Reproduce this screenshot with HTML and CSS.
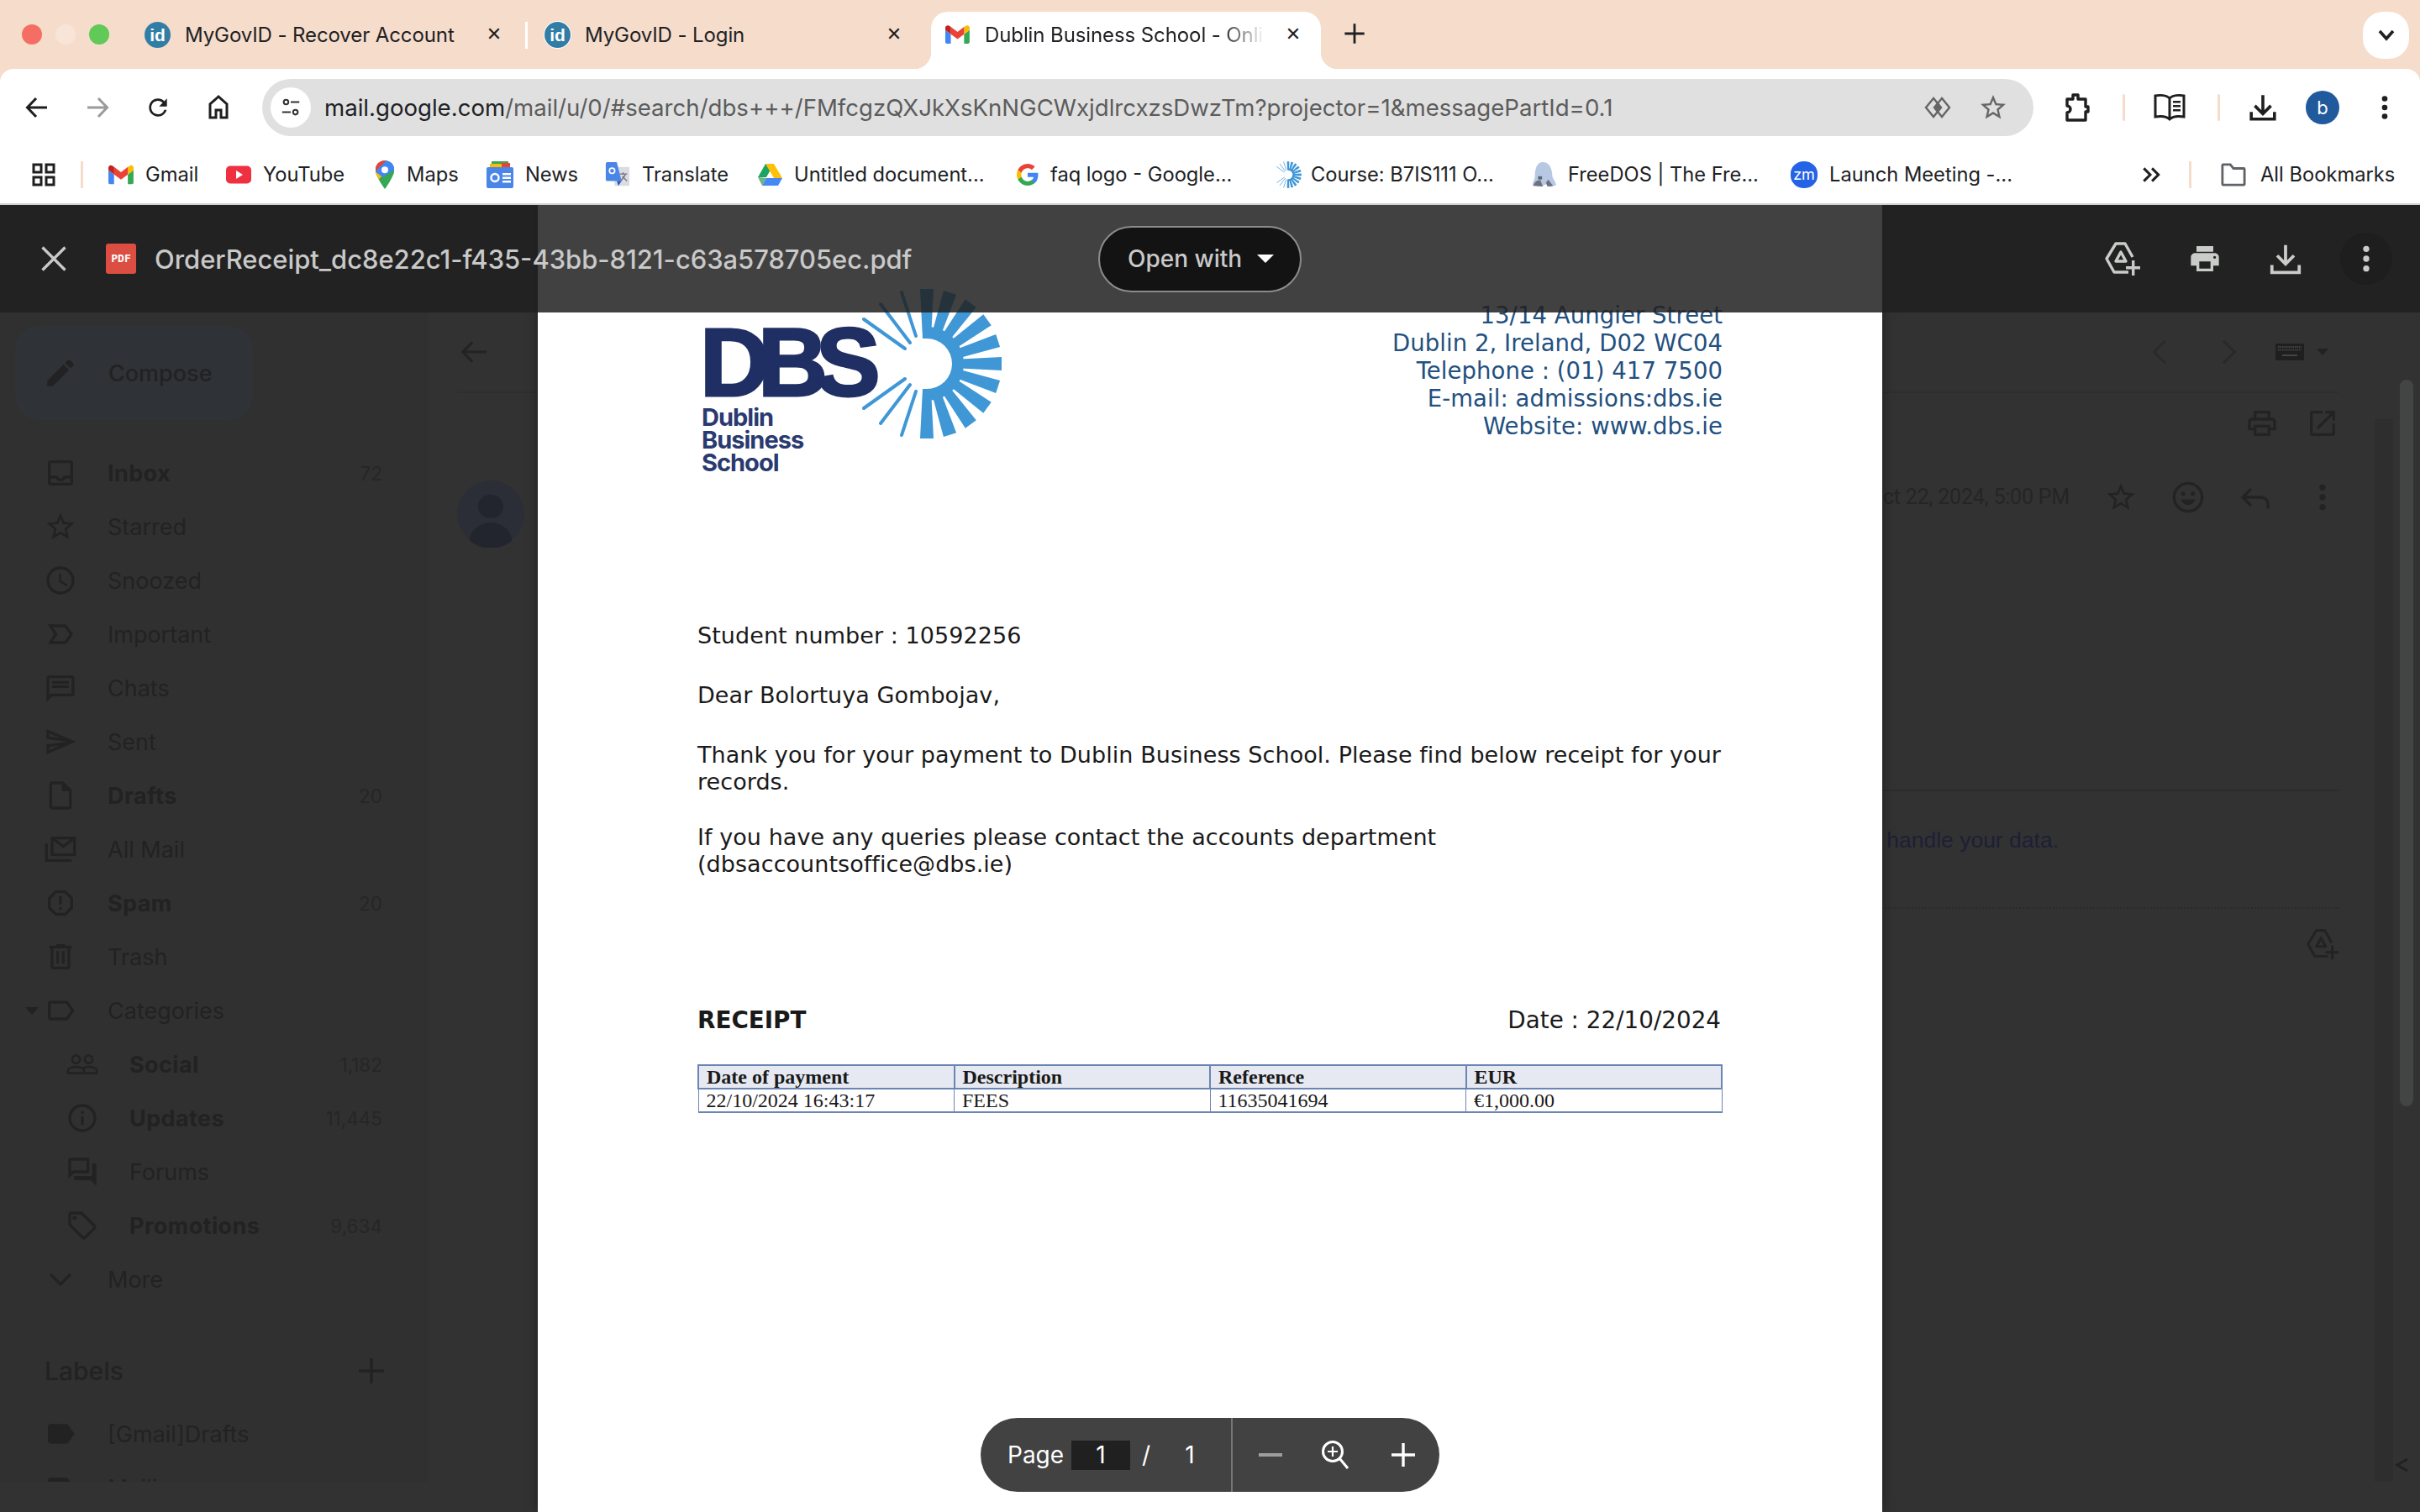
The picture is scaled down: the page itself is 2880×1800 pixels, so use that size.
FILE: index.html
```html
<!DOCTYPE html>
<html lang="en">
<head>
<meta charset="utf-8">
<title>Dublin Business School - Online</title>
<link rel="stylesheet" href="styles.css">
</head>
<body>
<svg class="defs" aria-hidden="true">
  <symbol id="i-gmail" viewBox="0 0 24 18">
    <path fill="#4285f4" d="M1.6 18h3.8V8.7L0 4.6v11.8C0 17.3.7 18 1.6 18z"/>
    <path fill="#34a853" d="M18.5 18h3.8c.9 0 1.6-.7 1.6-1.6V4.6l-5.4 4.1z"/>
    <path fill="#fbbc04" d="M18.5 1.6v7.1L24 4.6V2.4C24 .4 21.7-.7 20.1.5z"/>
    <path fill="#ea4335" d="M5.5 8.7V1.6L12 6.5l6.5-4.9v7.1L12 13.6z"/>
    <path fill="#c5221f" d="M0 2.4v2.2l5.5 4.1V1.6L3.9.5C2.3-.7 0 .4 0 2.4z"/>
  </symbol>
  <symbol id="i-sun" viewBox="0 0 180 180">
    <g fill="#3f97d6">
      <path d="M90 46a44 44 0 0 1 0 88z"/>
      <path d="M120 85l59-3v16l-59-3z" transform="rotate(-90 90 90)"/>
      <path d="M120 85l59-3v16l-59-3z" transform="rotate(-72 90 90)"/>
      <path d="M120 85l59-3v16l-59-3z" transform="rotate(-54 90 90)"/>
      <path d="M120 85l59-3v16l-59-3z" transform="rotate(-36 90 90)"/>
      <path d="M120 85l59-3v16l-59-3z" transform="rotate(-18 90 90)"/>
      <path d="M120 85l59-3v16l-59-3z"/>
      <path d="M120 85l59-3v16l-59-3z" transform="rotate(18 90 90)"/>
      <path d="M120 85l59-3v16l-59-3z" transform="rotate(36 90 90)"/>
      <path d="M120 85l59-3v16l-59-3z" transform="rotate(54 90 90)"/>
      <path d="M120 85l59-3v16l-59-3z" transform="rotate(72 90 90)"/>
      <path d="M120 85l59-3v16l-59-3z" transform="rotate(90 90 90)"/>
    </g>
    <circle cx="90" cy="90" r="30" fill="#fff"/>
    <g stroke="#3f97d6" stroke-width="4" stroke-linecap="round">
      <path d="M60 5l17 52M35 19l35 46M15 37l49 35M60 175l17-52M35 161l35-46M15 143l49-35"/>
    </g>
  </symbol>
  <symbol id="i-drive-add" viewBox="0 0 44 44">
    <g fill="none" stroke="currentColor" stroke-width="3.4" stroke-linejoin="round">
      <path d="M29 38H12L3 22 14 4h11l9 16"/>
      <path d="M20 14l6 11H14z"/>
    </g>
    <path fill="currentColor" d="M33 24h3.4v7H43v3.4h-6.6V42H33v-7.600h-7V31h7z"/>
  </symbol>
  <symbol id="i-print" viewBox="0 0 24 24"><path d="M19 8H5c-1.660 0-3 1.340-3 3v6h4v4h12v-4h4v-6c0-1.660-1.340-3-3-3zm-3 11H8v-5h8v5zm3-7c-.55 0-1-.45-1-1s.45-1 1-1 1 .45 1 1-.45 1-1 1zm-1-9H6v4h12V3z"/></symbol>
  <symbol id="i-print-o" viewBox="0 0 24 24"><path d="M19 8h-1V3H6v5H5c-1.660 0-3 1.340-3 3v6h4v4h12v-4h4v-6c0-1.660-1.340-3-3-3zM8 5h8v3H8V5zm8 12v2H8v-4h8v2zm2-2v-2H6v2H4v-4c0-.55.45-1 1-1h14c.55 0 1 .45 1 1v4h-2z"/></symbol>
  <symbol id="i-star" viewBox="0 0 24 24"><path d="M22 9.240l-7.190-.62L12 2 9.190 8.630 2 9.240l5.460 4.730L5.820 21 12 17.270 18.180 21l-1.630-7.030L22 9.240zM12 15.400l-3.760 2.270 1-4.280-3.320-2.880 4.380-.38L12 6.100l1.710 4.040 4.380.38-3.320 2.880 1 4.280L12 15.400z"/></symbol>
  <symbol id="i-dots" viewBox="0 0 24 24"><circle cx="12" cy="5" r="2.200"/><circle cx="12" cy="12" r="2.200"/><circle cx="12" cy="19" r="2.200"/></symbol>
  <symbol id="i-label" viewBox="0 0 24 24"><path d="M17.630 5.840C17.270 5.330 16.670 5 16 5L5 5.010C3.900 5.010 3 5.900 3 7v10c0 1.100.9 1.990 2 1.990L16 19c.67 0 1.270-.33 1.630-.84L22 12l-4.370-6.160zM16 17H5V7h11l3.550 5L16 17z"/></symbol>
  <symbol id="i-label-f" viewBox="0 0 24 24"><path d="M17.630 5.840C17.270 5.330 16.670 5 16 5L5 5.010C3.900 5.010 3 5.900 3 7v10c0 1.100.9 1.990 2 1.990L16 19c.67 0 1.270-.33 1.630-.84L22 12l-4.370-6.160z"/></symbol>
</svg>

<div class="browser">
  <div class="tabstrip">
    <div class="lights"><span class="light red"></span><span class="light idle"></span><span class="light green"></span></div>
    <div class="tab tab-one">
      <span class="fav-id">id</span>
      <span class="tab-title">MyGovID - Recover Account</span>
      <span class="tab-x">✕</span>
    </div>
    <span class="tab-sep"></span>
    <div class="tab tab-two">
      <span class="fav-id fav-square">id</span>
      <span class="tab-title">MyGovID - Login</span>
      <span class="tab-x">✕</span>
    </div>
    <div class="tab tab-active">
      <svg class="fav-gmail"><use href="#i-gmail"/></svg>
      <span class="tab-title tab-fade">Dublin Business School - Online</span>
      <span class="tab-x">✕</span>
    </div>
    <svg class="newtab" viewBox="0 0 24 24"><path d="M10.800 2h2.400v8.800H22v2.400h-8.800V22h-2.400v-8.800H2v-2.400h8.800z"/></svg>
    <div class="tab-menu"><svg viewBox="0 0 24 24"><path d="M4 7l8 9 8-9" fill="none" stroke="#202124" stroke-width="3.600"/></svg></div>
  </div>

  <div class="chrome">
    <div class="toolbar">
      <svg class="tb-icon" viewBox="0 0 32 32"><path d="M28 16H5M15 5 4.500 16 15 27" fill="none" stroke="#1f1f1f" stroke-width="3"/></svg>
      <svg class="tb-icon tb-disabled" viewBox="0 0 32 32"><path d="M4 16h23M17 5l10.500 11L17 27" fill="none" stroke="#9a9a9a" stroke-width="3"/></svg>
      <svg class="tb-icon" viewBox="0 0 24 24"><path fill="#1f1f1f" d="M17.650 6.350A7.958 7.958 0 0 0 12 4c-4.420 0-7.990 3.580-7.990 8s3.570 8 7.990 8c3.730 0 6.840-2.550 7.730-6h-2.080A5.990 5.990 0 0 1 12 18c-3.310 0-6-2.690-6-6s2.690-6 6-6c1.660 0 3.140.69 4.220 1.780L13 11h7V4l-2.350 2.350z"/></svg>
      <svg class="tb-icon" viewBox="0 0 32 32"><path d="M16 3 6 12v16h7v-9h6v9h7V12z" fill="none" stroke="#1f1f1f" stroke-width="3"/></svg>
      <div class="omnibox">
        <span class="site-chip"><svg viewBox="0 0 28 28"><g fill="none" stroke="#333" stroke-width="2.200"><circle cx="8" cy="7" r="3"/><path d="M14 7h11M3 20h11"/><circle cx="20" cy="20" r="3"/></g></svg></span>
        <span class="url"><b>mail.google.com</b>/mail/u/0/#search/dbs+++/FMfcgzQXJkXsKnNGCWxjdlrcxzsDwzTm?projector=1&amp;messagePartId=0.1</span>
        <svg class="omni-icon lens" viewBox="0 0 32 26"><g fill="none" stroke="#666" stroke-width="2.400"><path d="M11 2 2 13l9 11 9-11z"/><path d="M21 2 12 13l9 11 9-11z"/></g><path d="M16 7l5 6-5 6-5-6z" fill="#666"/></svg>
        <svg class="omni-icon star" viewBox="0 0 24 24" fill="#666"><use href="#i-star"/></svg>
      </div>
      <div class="tb-right">
        <svg class="ext" viewBox="0 0 32 36"><path d="M4 8h7V3h6v5h9v9h3v6h-3v10H4v-9a4 4 0 0 0 0-8z" fill="none" stroke="#1f1f1f" stroke-width="3.400" stroke-linejoin="round"/></svg>
        <span class="vsep"></span>
        <svg class="book" viewBox="0 0 40 34"><g fill="none" stroke="#1f1f1f" stroke-width="3"><path d="M20 6C16 2 8 2 3 3v25c6-1 13-1 17 3 4-4 11-4 17-3V3c-5-1-13-1-17 3zM20 6v25"/></g><path d="M24 9h9v2.500h-9zM24 14h9v2.500h-9zM24 19h9v2.500h-9z" fill="#1f1f1f"/></svg>
        <span class="vsep sep-two"></span>
        <svg class="dl" viewBox="0 0 32 32"><path d="M16 2v20M7 14l9 9 9-9M3 21v8h26v-8" fill="none" stroke="#1f1f1f" stroke-width="3.400"/></svg>
        <span class="avatar">b</span>
        <svg class="menu-dots" fill="#1f1f1f"><use href="#i-dots"/></svg>
      </div>
    </div>

    <div class="bookmarks">
      <svg class="apps" viewBox="0 0 28 28"><g fill="none" stroke="#1f1f1f" stroke-width="3"><rect x="2" y="2" width="9" height="9"/><rect x="17" y="2" width="9" height="9"/><rect x="2" y="17" width="9" height="9"/><rect x="17" y="17" width="9" height="9"/></g></svg>
      <span class="bm-sep"></span>
      <div class="bm-grid">
        <div class="bm"><svg class="bm-ic w-gm"><use href="#i-gmail"/></svg><span>Gmail</span></div>
        <div class="bm"><svg class="bm-ic" viewBox="0 0 30 30"><rect x="0" y="4.500" width="30" height="21" rx="5" fill="#ee3040"/><path d="M12 10l8 5-8 5z" fill="#fff"/></svg><span>YouTube</span></div>
        <div class="bm"><svg class="bm-ic w-maps" viewBox="0 0 24 36"><defs><clipPath id="pin"><path d="M12 0C5.400 0 0 5.400 0 12c0 8 12 24 12 24s12-16 12-24C24 5.400 18.600 0 12 0z"/></clipPath></defs><g clip-path="url(#pin)"><rect width="24" height="36" fill="#34a853"/><path d="M0 0h14L0 14z" fill="#ea4335"/><path d="M14 0h10v12L8 22 0 14z" fill="#4285f4"/><path d="M0 14l8 6-8 8z" fill="#fbbc04"/><path d="M24 12 8 22l4 14z" fill="#34a853"/></g><circle cx="12" cy="12" r="4.200" fill="#fff"/></svg><span>Maps</span></div>
        <div class="bm"><svg class="bm-ic w-news" viewBox="0 0 32 32"><path d="M6 0h20v8H6z" fill="#34a853"/><path d="M16 2h12v8H16z" fill="#ea4335"/><path d="M4 3h14v6H4z" fill="#fbbc04"/><rect y="7" width="32" height="25" rx="2" fill="#4a86e8"/><path d="M19 14h10v2.500H19zM19 18.500h10V21H19zM19 23h10v2.500H19z" fill="#fff"/><circle cx="10" cy="19.500" r="4.500" fill="none" stroke="#fff" stroke-width="2.400"/></svg><span>News</span></div>
        <div class="bm"><svg class="bm-ic" viewBox="0 0 30 32"><rect x="11" y="6" width="19" height="24" rx="1" fill="#dadce0"/><path d="M0 2a2 2 0 0 1 2-2h12l6 24H2a2 2 0 0 1-2-2z" fill="#4a86e8"/><path d="M14 24h6l-4 6z" fill="#2a56c6"/><circle cx="8" cy="11" r="3.400" fill="none" stroke="#fff" stroke-width="1.800"/><path d="M18 15h9M22 13v3M19 24l6-8M21 18l6 6" stroke="#6b7280" stroke-width="1.400" fill="none"/></svg><span>Translate</span></div>
        <div class="bm"><svg class="bm-ic" viewBox="0 0 30 28"><path d="M10 1h10l-9 16H1z" fill="#1ea362"/><path d="M10 1h10l10 17H20z" fill="#ffc107"/><path d="M6 27 11 18h19l-5 9z" fill="#4688f4"/><path d="M1 17l5 10 5-9z" fill="#188038" opacity=".6"/></svg><span>Untitled document...</span></div>
        <div class="bm"><svg class="bm-ic w-g" viewBox="0 0 24 24"><path fill="#4285F4" d="M23.500 12.300c0-.8-.1-1.600-.2-2.300H12v4.500h6.500c-.3 1.500-1.100 2.800-2.400 3.600v3h3.900c2.300-2.100 3.500-5.200 3.500-8.800z"/><path fill="#34A853" d="M12 24c3.200 0 6-1.100 8-2.900l-3.900-3c-1.100.7-2.500 1.200-4.100 1.200-3.100 0-5.800-2.100-6.700-5H1.300v3.100C3.300 21.300 7.300 24 12 24z"/><path fill="#FBBC05" d="M5.300 14.300c-.3-.7-.4-1.500-.4-2.300s.1-1.600.4-2.300V6.600h-4C.5 8.200 0 10 0 12s.5 3.800 1.300 5.400z"/><path fill="#EA4335" d="M12 4.800c1.800 0 3.300.6 4.600 1.800L20 3.100C18 1.200 15.200 0 12 0 7.300 0 3.300 2.700 1.300 6.600l4 3.100c.9-2.900 3.600-4.900 6.700-4.900z"/></svg><span>faq logo - Google...</span></div>
        <div class="bm"><svg class="bm-ic w-sun"><use href="#i-sun"/></svg><span>Course: B7IS111 O...</span></div>
        <div class="bm"><svg class="bm-ic" viewBox="0 0 32 32"><path d="M15 0c8 0 12 8 12 17 0 3 4 7 5 12-4 1-6 3-10 2l-3-3-5 3c-5 0-9-2-12-1 0-5 3-8 3-13C5 8 8 0 15 0z" fill="#b7c9e2"/><path d="M3 30c2-6 5-7 9-7l3 8zM19 26l3-4 6 8-7 1z" fill="#6b7280"/><path d="M9 18h5v4H9z" fill="#5a6472"/></svg><span>FreeDOS | The Fre...</span></div>
        <div class="bm"><span class="zm">zm</span><span>Launch Meeting -...</span></div>
      </div>
      <svg class="more-bm" viewBox="0 0 24 24"><path d="M4 5l7 7-7 7M13 5l7 7-7 7" fill="none" stroke="#1f1f1f" stroke-width="2.800"/></svg>
      <span class="bm-sep sep-all"></span>
      <div class="bm bm-all"><svg class="bm-ic" viewBox="0 0 32 30"><path d="M2 3a1 1 0 0 1 1-1h9l4 5h13a1 1 0 0 1 1 1v19a1 1 0 0 1-1 1H3a1 1 0 0 1-1-1z" fill="none" stroke="#5f6368" stroke-width="3"/></svg><span>All Bookmarks</span></div>
    </div>
  </div>
</div>

<div class="stage">
  <div class="gmail">
    <aside class="sidebar">
      <div class="compose"><svg class="compose-ic" viewBox="0 0 24 24"><path d="M3 17.250V21h3.750L17.810 9.940l-3.750-3.750L3 17.250zM20.710 7.040a.996.996 0 0 0 0-1.410l-2.340-2.340a.996.996 0 0 0-1.410 0l-1.830 1.830 3.750 3.750 1.830-1.830z"/></svg><span>Compose</span></div>
      <nav class="nav">
        <div class="nav-row strong"><svg class="nav-ic" viewBox="0 0 24 24"><path d="M19 3H5c-1.100 0-2 .9-2 2v14c0 1.100.9 2 2 2h14c1.100 0 2-.9 2-2V5c0-1.100-.9-2-2-2zm0 16H5v-3h3.560c.69 1.190 1.970 2 3.450 2s2.750-.81 3.450-2H19v3zm0-5h-4.990c0 1.100-.9 2-2 2s-2-.9-2-2H5V5h14v9z"/></svg><span class="nav-name">Inbox</span><span class="nav-count">72</span></div>
        <div class="nav-row"><svg class="nav-ic"><use href="#i-star"/></svg><span class="nav-name">Starred</span></div>
        <div class="nav-row"><svg class="nav-ic" viewBox="0 0 24 24"><path d="M11.990 2C6.470 2 2 6.480 2 12s4.470 10 9.990 10C17.520 22 22 17.520 22 12S17.520 2 11.990 2zM12 20c-4.420 0-8-3.580-8-8s3.580-8 8-8 8 3.580 8 8-3.580 8-8 8zm.5-13H11v6l5.250 3.150.75-1.230-4.500-2.670z"/></svg><span class="nav-name">Snoozed</span></div>
        <div class="nav-row"><svg class="nav-ic" viewBox="0 0 24 24"><path d="M15 19H3l4.500-7L3 5h12c.65 0 1.260.31 1.630.84L21 12l-4.370 6.160c-.37.52-.98.84-1.630.84zm-8.500-2H15l3.500-5L15 7H6.500l3.500 5-3.500 5z"/></svg><span class="nav-name">Important</span></div>
        <div class="nav-row"><svg class="nav-ic" viewBox="0 0 24 24"><path fill-rule="evenodd" d="M20 3H4c-1.100 0-2 .9-2 2v17l4-4h14c1.100 0 2-.9 2-2V5c0-1.100-.9-2-2-2zm0 13H5.200L4 17.200V5h16zM6 7h12v2H6zm0 3h12v2H6z"/></svg><span class="nav-name">Chats</span></div>
        <div class="nav-row"><svg class="nav-ic" viewBox="0 0 24 24"><path d="M4 6.030l7.510 3.220-7.520-1 .01-2.220m7.500 8.720L4 17.970v-2.220l7.500-1M2.010 3 2 10l15 2-15 2 .01 7L23 12 2.010 3z"/></svg><span class="nav-name">Sent</span></div>
        <div class="nav-row strong"><svg class="nav-ic" viewBox="0 0 24 24"><path d="M14 2H6c-1.100 0-2 .9-2 2v16c0 1.100.9 2 2 2h12c1.100 0 2-.9 2-2V8l-6-6zM6 20V4h7v5h5v11H6z"/></svg><span class="nav-name">Drafts</span><span class="nav-count">20</span></div>
        <div class="nav-row"><svg class="nav-ic" viewBox="0 0 24 24"><path fill="none" stroke="currentColor" stroke-width="2" d="M6 4h16v12H6zM6 4l8 6 8-6M2 8v12h18"/></svg><span class="nav-name">All Mail</span></div>
        <div class="nav-row strong"><svg class="nav-ic" viewBox="0 0 24 24"><path d="M15.730 3H8.270L3 8.270v7.460L8.270 21h7.460L21 15.730V8.270L15.730 3zM19 14.900 14.900 19H9.100L5 14.900V9.100L9.100 5h5.800L19 9.100v5.800zM11 7h2v6h-2zM11 15h2v2h-2z"/></svg><span class="nav-name">Spam</span><span class="nav-count">20</span></div>
        <div class="nav-row"><svg class="nav-ic" viewBox="0 0 24 24"><path d="M15 4V3H9v1H4v2h1v13c0 1.100.9 2 2 2h10c1.100 0 2-.9 2-2V6h1V4h-5zm2 15H7V6h10v13zM9 8h2v9H9zm4 0h2v9h-2z"/></svg><span class="nav-name">Trash</span></div>
        <div class="nav-row nav-cat"><span class="caret"></span><svg class="nav-ic"><use href="#i-label"/></svg><span class="nav-name">Categories</span></div>
        <div class="nav-row sub strong"><svg class="nav-ic" viewBox="0 0 24 24"><path d="M16.500 13c-1.200 0-3.070.34-4.500 1-1.430-.67-3.300-1-4.500-1C5.330 13 1 14.080 1 16.250V19h22v-2.750c0-2.170-4.330-3.250-6.500-3.250zm-4 4.500h-10v-1.250c0-.54 2.560-1.750 5-1.750s5 1.210 5 1.750v1.250zm9 0H14v-1.250c0-.46-.2-.86-.52-1.220.88-.3 1.960-.53 3.020-.53 2.440 0 5 1.210 5 1.750v1.250zM7.500 12c1.930 0 3.500-1.570 3.500-3.500S9.430 5 7.500 5 4 6.570 4 8.500 5.570 12 7.500 12zm0-5.500c1.100 0 2 .9 2 2s-.9 2-2 2-2-.9-2-2 .9-2 2-2zm9 5.500c1.930 0 3.500-1.570 3.500-3.500S18.430 5 16.500 5 13 6.570 13 8.500s1.570 3.500 3.500 3.500zm0-5.500c1.100 0 2 .9 2 2s-.9 2-2 2-2-.9-2-2 .9-2 2-2z"/></svg><span class="nav-name">Social</span><span class="nav-count">1,182</span></div>
        <div class="nav-row sub strong"><svg class="nav-ic" viewBox="0 0 24 24"><path d="M11 7h2v2h-2zm0 4h2v6h-2zm1-9C6.480 2 2 6.480 2 12s4.480 10 10 10 10-4.480 10-10S17.520 2 12 2zm0 18c-4.410 0-8-3.590-8-8s3.590-8 8-8 8 3.590 8 8-3.590 8-8 8z"/></svg><span class="nav-name">Updates</span><span class="nav-count">11,445</span></div>
        <div class="nav-row sub"><svg class="nav-ic" viewBox="0 0 24 24"><path d="M15 4v7H5.170L4 12.170V4h11m1-2H3c-.55 0-1 .45-1 1v14l4-4h10c.55 0 1-.45 1-1V3c0-.55-.45-1-1-1zm5 4h-2v9H6v2c0 .55.45 1 1 1h11l4 4V7c0-.55-.45-1-1-1z"/></svg><span class="nav-name">Forums</span></div>
        <div class="nav-row sub strong"><svg class="nav-ic" viewBox="0 0 24 24"><path d="M21.410 11.580l-9-9C12.050 2.220 11.550 2 11 2H4c-1.100 0-2 .9-2 2v7c0 .55.22 1.050.59 1.420l9 9c.36.36.86.58 1.410.58s1.050-.22 1.410-.59l7-7c.37-.36.59-.86.59-1.410s-.23-1.060-.59-1.420zM13 20.010 4 11V4h7v-.01l9 9-7 7.020z"/><circle cx="6.500" cy="6.500" r="1.500"/></svg><span class="nav-name">Promotions</span><span class="nav-count">9,634</span></div>
        <div class="nav-row"><svg class="nav-ic" viewBox="0 0 24 24"><path d="M5 8.500l7 7 7-7" fill="none" stroke="currentColor" stroke-width="2"/></svg><span class="nav-name">More</span></div>
      </nav>
      <div class="labels-head"><span>Labels</span><svg class="nav-ic" viewBox="0 0 24 24"><path d="M11 3h2v8h8v2h-8v8h-2v-8H3v-2h8z"/></svg></div>
      <div class="nav-row"><svg class="nav-ic"><use href="#i-label-f"/></svg><span class="nav-name">[Gmail]Drafts</span></div>
      <div class="nav-row"><svg class="nav-ic"><use href="#i-label-f"/></svg><span class="nav-name">Mailing</span></div>
    </aside>

    <main class="mail">
      <div class="mail-top">
        <svg class="m-ic" viewBox="0 0 24 24"><path d="M21 12H4.500M11 5l-7 7 7 7" fill="none" stroke="currentColor" stroke-width="1.800"/></svg>
        <div class="mail-pager">
          <svg class="m-ic" viewBox="0 0 24 24"><path d="M15 4l-8 8 8 8" fill="none" stroke="#2a2a2a" stroke-width="1.800"/></svg>
          <svg class="m-ic" viewBox="0 0 24 24"><path d="M9 4l8 8-8 8" fill="none" stroke="#2a2a2a" stroke-width="1.800"/></svg>
          <svg class="kbd" viewBox="0 0 34 20"><rect width="34" height="20" fill="#1f1f1f"/><path d="M3 4h28M3 7.500h28" stroke="#444" stroke-width="2" stroke-dasharray="1.500 1"/><path d="M8 14h18" stroke="#444" stroke-width="2"/></svg>
          <span class="kbd-caret"></span>
        </div>
      </div>
      <div class="mail-actions">
        <svg class="m-ic"><use href="#i-print-o"/></svg>
        <svg class="m-ic" viewBox="0 0 24 24"><path d="M19 19H5V5h7V3H5a2 2 0 0 0-2 2v14a2 2 0 0 0 2 2h14c1.100 0 2-.9 2-2v-7h-2v7zM14 3v2h3.590l-9.830 9.830 1.410 1.410L19 6.410V10h2V3h-7z"/></svg>
      </div>
      <div class="mail-sender">
        <svg class="sender-av" viewBox="0 0 80 80"><circle cx="40" cy="40" r="40" fill="#2b2e36"/><ellipse cx="40" cy="31" rx="15" ry="14" fill="#23252e"/><path d="M15 72c0-14 14-22 25-22s25 8 25 22a40 40 0 0 1-50 0z" fill="#23252e"/></svg>
        <span class="mail-date">Oct 22, 2024, 5:00 PM</span>
        <div class="sender-actions">
          <svg class="m-ic"><use href="#i-star"/></svg>
          <svg class="m-ic" viewBox="0 0 24 24"><circle cx="12" cy="12" r="10" fill="none" stroke="currentColor" stroke-width="2"/><circle cx="8.500" cy="9.500" r="1.500"/><circle cx="15.500" cy="9.500" r="1.500"/><path d="M7 13.500h10c-.8 2.800-2.800 4-5 4s-4.200-1.200-5-4z"/></svg>
          <svg class="m-ic" viewBox="0 0 24 24"><path d="M9 6l-6 6 6 6M3.500 12H16c3 0 5 2 5 5v3" fill="none" stroke="currentColor" stroke-width="2"/></svg>
          <svg class="m-ic"><use href="#i-dots"/></svg>
        </div>
      </div>
      <div class="mail-rule"></div>
      <p class="mail-policy">handle your data.</p>
      <div class="mail-dots"></div>
      <div class="mail-attach"><svg class="m-ic"><use href="#i-drive-add"/></svg></div>
    </main>

    <div class="side-tray"></div>
    <div class="scrolltrack"><span class="scrollthumb"></span></div>
    <svg class="tray-toggle" viewBox="0 0 24 24"><path d="M18 5 6 12l12 7" fill="none" stroke="#222" stroke-width="3"/></svg>
  </div>

  <div class="viewer">
    <article class="doc">
      <header class="doc-head">
        <div class="logo">
          <div class="logo-words">
            <div class="logo-dbs">DBS</div>
            <div class="logo-name">Dublin<br>Business<br>School</div>
          </div>
          <svg class="logo-sun"><use href="#i-sun"/></svg>
        </div>
        <address class="doc-address">13/14 Aungier Street<br>Dublin 2, Ireland, D02 WC04<br>Telephone : (01) 417 7500<br>E-mail: admissions:dbs.ie<br>Website: www.dbs.ie</address>
      </header>
      <p class="para">Student number : 10592256</p>
      <p class="para para-gap">Dear Bolortuya Gombojav,</p>
      <p class="para para-gap">Thank you for your payment to Dublin Business School. Please find below receipt for your<br>records.</p>
      <p class="para para-gap-sm">If you have any queries please contact the accounts department<br>(dbsaccountsoffice@dbs.ie)</p>
      <div class="receipt-head"><b>RECEIPT</b><span>Date : 22/10/2024</span></div>
      <table class="receipt">
        <thead><tr><th>Date of payment</th><th>Description</th><th>Reference</th><th>EUR</th></tr></thead>
        <tbody><tr><td>22/10/2024 16:43:17</td><td>FEES</td><td>11635041694</td><td>€1,000.00</td></tr></tbody>
      </table>
    </article>

    <header class="viewer-bar">
      <svg class="vb-close" viewBox="0 0 24 24"><path d="M3 3l18 18M21 3 3 21" stroke="#c9c9c9" stroke-width="2.200" fill="none"/></svg>
      <span class="pdf-badge">PDF</span>
      <span class="file-name">OrderReceipt_dc8e22c1-f435-43bb-8121-c63a578705ec.pdf</span>
      <button class="open-with">Open with<span class="open-caret"></span></button>
      <div class="vb-actions">
        <svg class="vb-ic drive"><use href="#i-drive-add"/></svg>
        <svg class="vb-ic"><use href="#i-print"/></svg>
        <svg class="vb-ic" viewBox="0 0 32 32"><path d="M16 3v18M8 13l8 8 8-8M3 22v7h26v-7" fill="none" stroke="currentColor" stroke-width="3"/></svg>
        <span class="vb-more"><svg class="vb-ic"><use href="#i-dots"/></svg></span>
      </div>
    </header>

    <div class="pager">
      <span class="pager-label">Page</span>
      <span class="pager-input">1</span>
      <span class="pager-slash">/</span>
      <span class="pager-total">1</span>
      <span class="pager-div"></span>
      <svg class="pg-ic" viewBox="0 0 30 30"><path d="M1 15h28" stroke="#9e9e9e" stroke-width="4"/></svg>
      <svg class="pg-ic" viewBox="0 0 36 36"><g fill="none" stroke="#fff" stroke-width="3"><circle cx="15" cy="14" r="11.500"/><path d="M23 22l10 12"/><path d="M15 8v12M9 14h12" stroke-width="2.200"/></g></svg>
      <svg class="pg-ic" viewBox="0 0 30 30"><path d="M1 15h28M15 1v28" stroke="#fff" stroke-width="3.400"/></svg>
    </div>
  </div>
</div>
</body>
</html>
```

FILE: styles.css
```css
* { box-sizing: border-box; }
html, body { margin: 0; padding: 0; }
body {
  width: 2880px;
  height: 1800px;
  overflow: hidden;
  font-family: Inter, "Liberation Sans", sans-serif;
  background: #313131;
  color: #202124;
  display: flex;
  flex-direction: column;
}
.defs { position: absolute; width: 0; height: 0; }

/* Browser chrome */
.browser { height: 244px; flex: none; background: #f6dccb; }
.tabstrip { height: 82px; display: flex; align-items: flex-start; }
.lights { width: 172px; height: 82px; padding-left: 26px; display: flex; gap: 16px; align-items: center; flex: none; }
.light { width: 24px; height: 24px; border-radius: 50%; }
.red { background: #f46e63; }
.idle { background: #f9e4d8; }
.green { background: #60c958; }
.tab { display: flex; align-items: center; font-size: 24px; height: 54px; margin-top: 14px; color: #202124; flex: none; white-space: nowrap; }
.tab-one { width: 453px; }
.tab-sep { width: 3px; height: 32px; margin-top: 26px; background: #fff; flex: none; }
.tab-two { width: 460px; margin-left: 20px; }
.tab-two .tab-x { margin-right: 27px; }
.tab-active {
  width: 464px;
  height: 68px;
  padding: 0 16px 14px 17px;
  background: #fff;
  border-radius: 20px 20px 0 0;
  position: relative;
}
.tab-active::before, .tab-active::after {
  content: "";
  position: absolute;
  bottom: 0;
  width: 20px;
  height: 20px;
}
.tab-active::before { left: -20px; background: radial-gradient(circle at 0 0, transparent 20px, #fff 20.500px); }
.tab-active::after { right: -20px; background: radial-gradient(circle at 100% 0, transparent 20px, #fff 20.500px); }
.fav-id {
  width: 31px;
  height: 31px;
  border-radius: 50%;
  background: #317da5;
  color: #fff;
  font: 700 21px/31px "Liberation Sans", sans-serif;
  text-align: center;
  margin-right: 17px;
  flex: none;
}
.fav-square { box-shadow: 0 0 0 1px #fff; }
.fav-gmail { width: 29px; height: 28px; margin-right: 18px; flex: none; }
.tab-title { flex: 1; overflow: hidden; letter-spacing: -.1px; }
.tab-active .tab-title { max-width: 333px; }
.tab-fade { -webkit-mask-image: linear-gradient(90deg, #000 85%, transparent 100%); mask-image: linear-gradient(90deg, #000 85%, transparent 100%); }
.tab-x { width: 34px; text-align: center; font: 700 22px/1 "DejaVu Sans", sans-serif; color: #222; flex: none; margin-right: 20px; }
.tab-active .tab-x { margin-right: 0; margin-left: auto; }
.newtab { width: 28px; height: 28px; margin: 26px 0 0 26px; fill: #202124; flex: none; }
.tab-menu { width: 55px; height: 56px; margin: 14px 0 0 auto; margin-right: 13px; background: #fff; border-radius: 24px; display: flex; align-items: center; justify-content: center; }
.tab-menu svg { width: 24px; height: 24px; }

.chrome { height: 162px; background: #fff; border-radius: 16px 16px 0 0; border-bottom: 2px solid #d1d1d1; }
.toolbar { height: 81px; display: flex; align-items: center; padding-left: 28px; padding-top: 10px; }
.tb-icon { width: 32px; height: 32px; margin-right: 40px; flex: none; }
.omnibox {
  width: 2108px;
  height: 68px;
  margin-left: -4px;
  background: #e0e0e0;
  border-radius: 34px;
  display: flex;
  align-items: center;
  padding-left: 10px;
  flex: none;
}
.site-chip { width: 48px; height: 48px; border-radius: 50%; background: #fff; display: flex; align-items: center; justify-content: center; flex: none; }
.site-chip svg { width: 26px; height: 26px; }
.url { margin-left: 16px; font-size: 27.600px; color: #5c5c5c; white-space: nowrap; width: 1904px; flex: none; }
.url b { font-weight: 400; color: #202124; }
.omni-icon { width: 32px; height: 26px; flex: none; }
.star { width: 36px; height: 36px; margin-left: 32px; }
.tb-right { display: flex; align-items: center; flex: 1; height: 60px; padding-left: 36px; }
.ext { width: 32px; height: 36px; }
.vsep { width: 3px; height: 32px; border-radius: 2px; background: #f6dccb; margin-left: 38px; }
.book { width: 40px; height: 34px; margin-left: 33px; }
.sep-two { margin-left: 37px; }
.dl { width: 34px; height: 34px; margin-left: 34px; }
.avatar { width: 40px; height: 40px; border-radius: 50%; background: #205a9c; color: #fff; font-size: 22px; line-height: 40px; text-align: center; margin-left: 34px; }
.menu-dots { width: 36px; height: 36px; margin-left: 36px; }

.bookmarks { height: 79px; display: flex; align-items: center; padding: 10px 0 0 38px; font-size: 23.700px; color: #202124; }
.apps { width: 28px; height: 28px; flex: none; }
.bm-sep { width: 3px; height: 32px; background: #f6dccb; margin-left: 30px; flex: none; }
.bm-grid { display: grid; grid-template-columns: 140px 177px 133px 141px 181px 309px 307px 305px 309px 429px; margin-left: 30px; flex: none; }
.bm { display: flex; align-items: center; white-space: nowrap; gap: 14px; }
.bm-ic { width: 30px; height: 30px; flex: none; }
.w-gm { height: 24px; }
.w-maps { width: 24px; height: 34px; }
.w-news { width: 32px; height: 32px; }
.w-g { width: 26px; height: 26px; }
.w-sun { width: 32px; height: 32px; margin-right: -3px; }
.zm { width: 32px; height: 32px; border-radius: 50%/46%; background: #2563e6; color: #fff; font-size: 18px; line-height: 32px; text-align: center; flex: none; }
.more-bm { width: 26px; height: 26px; margin-left: -13px; flex: none; }
.sep-all { margin-left: 32px; }
.bm-all { margin-left: 35px; gap: 17px; }

/* Stage */
.stage { position: relative; flex: 1; min-height: 0; overflow: hidden; }
.gmail { height: 1556px; display: flex; background: #323232; color: #222; font-family: Inter, sans-serif; }
.sidebar { width: 510px; height: 1520px; overflow: hidden; padding-top: 144px; background: #303030; flex: none; }
.compose { width: 283px; height: 112px; margin-left: 18px; border-radius: 28px; background: #2f3236; display: flex; align-items: center; padding-left: 34px; font-size: 27px; font-weight: 500; gap: 36px; color: #222; }
.compose-ic { width: 42px; height: 42px; fill: currentColor; margin: 0 0 0 -1px; flex: none; }
.nav { margin-top: 31px; }
.nav-row { height: 64px; display: flex; align-items: center; font-size: 27px; padding-left: 52px; width: 455px; position: relative; }
.nav-ic { width: 40px; height: 40px; margin-right: 36px; fill: currentColor; flex: none; }
.nav-name { flex: 1; white-space: nowrap; }
.nav-count { font-size: 22.500px; font-weight: 400; color: #262626; }
.strong .nav-name { font-weight: 700; letter-spacing: .4px; }
.sub { padding-left: 78px; }
.caret { position: absolute; left: 30px; top: 28px; border: 8px solid transparent; border-top: 9px solid #222; border-bottom: 0; }
.labels-head { height: 64px; margin-top: 45px; margin-bottom: 11px; width: 455px; padding-left: 53px; display: flex; align-items: center; justify-content: space-between; font-size: 30px; font-weight: 500; }
.labels-head .nav-ic { margin-right: -7px; }

.mail { flex: none; width: 2316px; padding: 128px 42px 0 34px; display: flex; flex-direction: column; }
.m-ic { width: 40px; height: 40px; fill: currentColor; color: #232323; flex: none; }
.mail-top { height: 96px; display: flex; align-items: center; justify-content: space-between; border-bottom: 2px solid #2e2e2e; }
.mail-pager { display: flex; align-items: center; }
.mail-pager .m-ic + .m-ic { margin-left: 39px; }
.kbd { width: 34px; height: 20px; margin-left: 37px; }
.kbd-caret { border: 7px solid transparent; border-top: 8px solid #222; border-bottom: 0; margin: 0 13px 0 15px; }
.mail-actions { height: 72px; display: flex; justify-content: flex-end; align-items: center; gap: 32px; }
.mail-sender { height: 80px; margin-top: 32px; display: flex; align-items: flex-start; }
.sender-av { width: 80px; height: 80px; flex: none; }
.mail-date { margin-left: auto; font: 25px/40px Roboto, sans-serif; color: #252525; margin-right: 41px; white-space: nowrap; letter-spacing: -.2px; }
.sender-actions { display: flex; gap: 40px; }
.mail-rule { height: 2px; margin: 288px 0 0 400px; background: #2c2c2c; }
.mail-policy { margin: 43px 334px 0 0; text-align: right; font: 26.500px/30px "Liberation Sans", sans-serif; color: #1d1f36; }
.mail-dots { margin: 65px 0 0 400px; border-top: 2px dotted #2a2a2a; }
.mail-attach { margin-top: 22px; display: flex; justify-content: flex-end; }
.side-tray { width: 22px; height: 1265px; margin-top: 255px; background: #2e2e2e; flex: none; }
.scrolltrack { width: 32px; padding: 208px 8px 0; flex: none; }
.scrollthumb { display: block; width: 16px; height: 865px; border-radius: 8px; background: #434544; }
.tray-toggle { position: absolute; right: 9px; top: 1488px; width: 24px; height: 24px; }

/* Viewer overlay */
.viewer { position: absolute; inset: 0; display: flex; justify-content: center; }
.doc {
  width: 1600px;
  height: 1556px;
  background: #fff;
  padding: 0 190px;
  color: #1a1a1a;
  box-shadow: 0 0 14px rgba(0,0,0,.35);
  font: 27px/32px "DejaVu Sans", Verdana, sans-serif;
  letter-spacing: .06px;
}
.doc-head { height: 497px; display: flex; justify-content: space-between; align-items: flex-start; }
.logo { margin: 99px 0 0 3px; display: flex; align-items: flex-start; }
.logo-words { width: 180px; padding-top: 46px; white-space: nowrap; }
.logo-dbs { font: 700 115px/84px "Liberation Sans", sans-serif; letter-spacing: -14px; color: #1f2f63; -webkit-text-stroke: 3px #1f2f63; }
.logo-name { margin: 10px 0 0 2px; font: 700 29px/27px Inter, sans-serif; letter-spacing: -1px; color: #2a3a70; }
.logo-sun { width: 180px; height: 180px; }
.doc-address { margin-top: 115px; text-align: right; font-style: normal; font-size: 27.500px; color: #22507f; line-height: 33px; white-space: nowrap; }
.para { margin: 0; white-space: nowrap; }
.para-gap { margin-top: 39px; }
.para-gap-sm { margin-top: 34px; }
.receipt-head { margin-top: 154px; display: flex; justify-content: space-between; padding-right: 2px; font-size: 27.800px; letter-spacing: 0; }
.receipt { width: 100%; margin-top: 36px; border-collapse: collapse; table-layout: fixed; font: 24px/26px "Liberation Serif", serif; letter-spacing: 0; color: #1a1a1a; }
.receipt th, .receipt td { border: 2px solid #6a85b4; text-align: left; padding: 0 0 0 9px; }
.receipt th { font-weight: 700; background: #e6e9f1; }
.receipt td { border-width: 1.500px 1px 2px; }

.viewer-bar {
  position: absolute;
  top: 0; left: 0; right: 0;
  height: 128px;
  background: rgba(32,32,32,.85);
  display: flex;
  align-items: center;
  padding: 0 44px;
  color: #c9c9c9;
}
.vb-close { width: 36px; height: 36px; margin-left: 2px; flex: none; }
.pdf-badge { width: 36px; height: 36px; margin-left: 44px; background: #dc4e41; border-radius: 3px; color: #fff; font: 700 13px/36px "DejaVu Sans Mono", monospace; text-align: center; flex: none; }
.file-name { width: 1123px; margin-left: 22px; font-size: 30.900px; font-weight: 500; white-space: nowrap; flex: none; }
.open-with { width: 242px; height: 79px; border: 2px solid #8c8c8c; border-radius: 40px; background: #131313; color: #c9c9c9; font: 500 28px/1 Inter, sans-serif; display: flex; align-items: center; justify-content: space-between; padding: 0 31px 0 33px; flex: none; }
.open-caret { border: 10px solid transparent; border-top: 10px solid #fff; border-bottom: 0; }
.vb-actions { margin-left: auto; display: flex; gap: 56px; align-items: center; }
.vb-ic { width: 40px; height: 40px; fill: currentColor; flex: none; color: #c9ccc8; display: block; }
.vb-ic.drive { width: 44px; height: 44px; }
.vb-more { display: block; background: #1e1e1e; border-radius: 50%; box-shadow: 0 0 0 11px #1e1e1e; }

.pager {
  position: absolute;
  left: 1167px;
  top: 1444px;
  width: 546px;
  height: 88px;
  border-radius: 44px;
  background: #424242;
  display: flex;
  align-items: center;
  padding-left: 32px;
  color: #fff;
  font: 28px/1 Inter, sans-serif;
}
.pager-label { width: 76px; }
.pager-input { width: 70px; height: 35px; background: #202020; text-align: center; line-height: 35px; }
.pager-slash { margin-left: 14px; width: 30px; }
.pager-total { width: 66px; text-align: center; margin-left: -6px; }
.pager-div { width: 2px; height: 88px; background: #777; margin-left: 16px; }
.pg-ic { width: 30px; height: 30px; flex: none; margin-left: 30px; }
.pg-ic + .pg-ic { width: 36px; height: 36px; margin-left: 44px; }
.pg-ic + .pg-ic + .pg-ic { width: 30px; height: 30px; margin-left: 48px; }
```
